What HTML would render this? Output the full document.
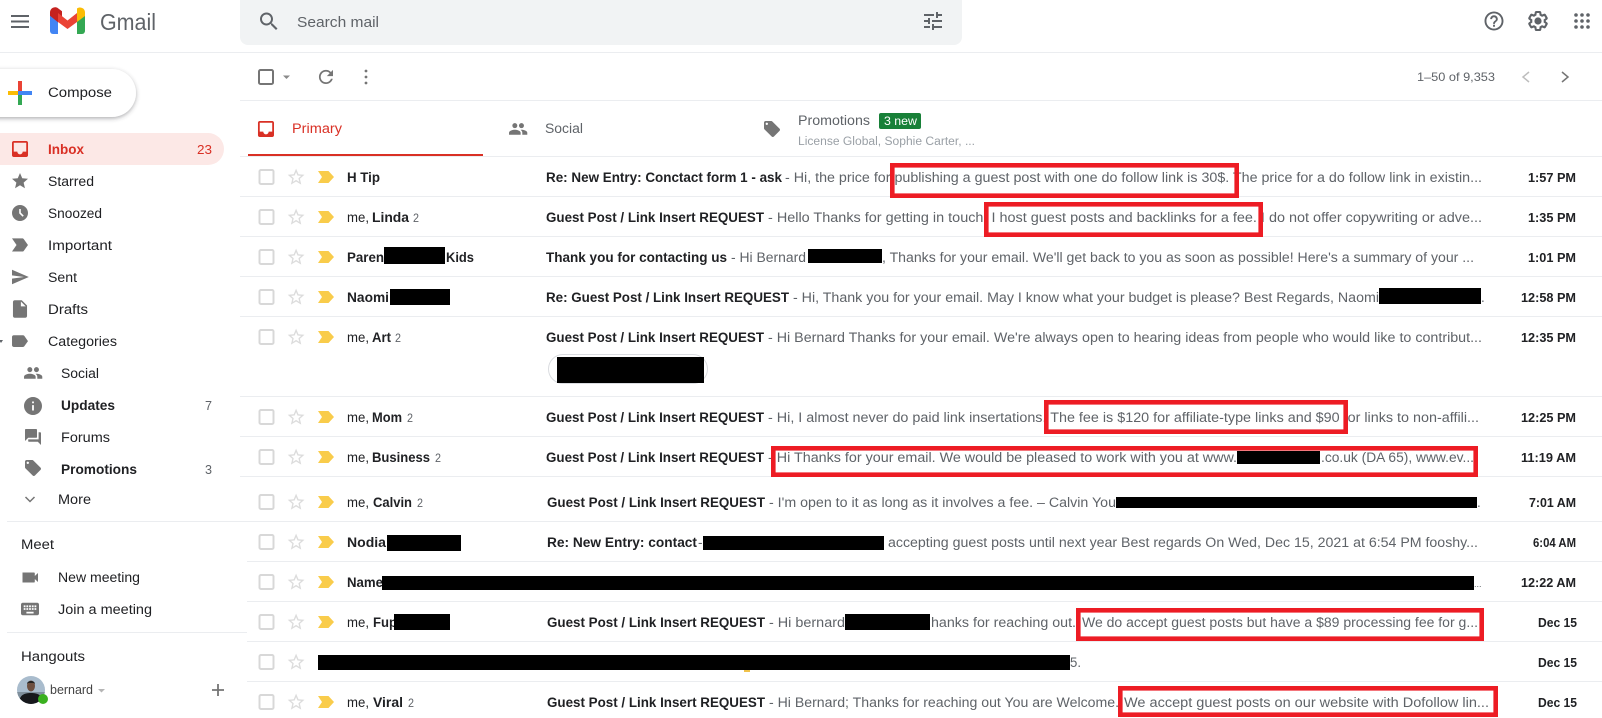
<!DOCTYPE html>
<html><head><meta charset="utf-8"><title>Gmail</title>
<style>
html,body{margin:0;padding:0;background:#fff;width:1602px;height:718px;overflow:hidden}
svg{display:block}
text{font-family:"Liberation Sans",sans-serif;font-size:13.5px;fill:#3c4043;white-space:pre}
.b{font-weight:700;fill:#202124}
.t{font-weight:700;fill:#202124;font-size:12.5px}
.s{fill:#5f6368}
.n{fill:#202124}
.i{fill:#757575}
.l{fill:#ebedf0}
.k{fill:#000}
.r{fill:none;stroke:#ed1c24;stroke-width:4.6}
</style></head><body>
<svg width="1602" height="718" viewBox="0 0 1602 718" xmlns="http://www.w3.org/2000/svg">
<defs>
<filter id="sh" x="-20%" y="-30%" width="140%" height="170%"><feDropShadow dx="0" dy="1.5" stdDeviation="2" flood-color="#3c4043" flood-opacity=".42"/></filter>
<g id="rown">
<rect x="259.5" y="-7" width="14" height="14" rx="1.5" fill="none" stroke="#d8d8d8" stroke-width="2"/>
<path transform="translate(286,-10) scale(.84)" fill="#dcdcdc" d="M22 9.24l-7.19-.62L12 2 9.19 8.63 2 9.24l5.46 4.73L5.82 21 12 17.27 18.18 21l-1.63-7.03L22 9.24zM12 15.4l-3.76 2.27 1-4.28-3.32-2.88 4.38-.38L12 6.1l1.71 4.04 4.38.38-3.32 2.88 1 4.28L12 15.4z"/>
</g>
<g id="row">
<use href="#rown"/>
<path fill="#f9cc4b" d="M318 -6h10.5l5.5 6-5.500 6H318l4-6z"/>
</g>
</defs>

<!-- Header -->
<rect x="11" y="15" width="18" height="2" fill="#5f6368"/><rect x="11" y="20.500" width="18" height="2" fill="#5f6368"/><rect x="11" y="26" width="18" height="2" fill="#5f6368"/>
<path fill="#4285f4" d="M50 15V31a3 3 0 0 0 3 3h5V20z"/>
<path fill="#34a853" d="M77 20V34h5a3 3 0 0 0 3-3V15z"/>
<path fill="#c5221f" d="M50 12.500c0-4.500 5-6.500 8-4.300l4 3v9l-4 2-8-6.500z"/>
<path fill="#fbbc04" d="M77 22V8.500c3-2.300 8-.5 8 4v3.500z"/>
<path fill="#ea4335" d="M58 13l9.500 7.500L77 13v9l-9.500 7L58 22z"/>
<text x="100" y="30" textLength="56" lengthAdjust="spacingAndGlyphs" style="font-size:23px;fill:#5f6368">Gmail</text>

<path d="M240 0H962V37a8 8 0 0 1-8 8H248a8 8 0 0 1-8-8z" fill="#f1f3f4"/>
<path transform="translate(257,9.5)" fill="#5f6368" d="M15.500 14h-.79l-.28-.27C15.410 12.590 16 11.110 16 9.500 16 5.910 13.090 3 9.500 3S3 5.910 3 9.500 5.910 16 9.500 16c1.610 0 3.090-.59 4.230-1.570l.27.28v.79l5 4.990L20.490 19l-4.990-5zm-6 0C7.010 14 5 11.990 5 9.500S7.010 5 9.500 5 14 7.010 14 9.500 11.990 14 9.500 14z"/>
<text x="297" y="27" textLength="82" lengthAdjust="spacingAndGlyphs" class="s" style="font-size:15px">Search mail</text>
<path transform="translate(921,9)" fill="#5f6368" d="M3 17v2h6v-2H3zM3 5v2h10V5H3zm10 16v-2h8v-2h-8v-2h-2v6h2zM7 9v2H3v2h4v2h2V9H7zm14 4v-2H11v2h10zm-6-4h2V7h4V5h-4V3h-2v6z"/>

<path transform="translate(1482.6,9.6) scale(.95)" fill="#5f6368" d="M11 18h2v-2h-2v2zm1-16C6.480 2 2 6.480 2 12s4.480 10 10 10 10-4.480 10-10S17.520 2 12 2zm0 18c-4.410 0-8-3.590-8-8s3.590-8 8-8 8 3.590 8 8-3.590 8-8 8zm0-14c-2.210 0-4 1.790-4 4h2c0-1.100.9-2 2-2s2 .9 2 2c0 2-3 1.750-3 5h2c0-2.250 3-2.500 3-5 0-2.210-1.790-4-4-4z"/>
<path transform="translate(1527.2,10.2) scale(.9)" fill="none" stroke="#5f6368" stroke-width="2.3" d="M19.430 12.980c.04-.32.07-.64.07-.98s-.03-.66-.07-.98l2.110-1.650c.19-.15.24-.42.12-.64l-2-3.460c-.12-.22-.39-.3-.61-.22l-2.490 1c-.52-.4-1.080-.73-1.690-.98l-.38-2.650C14.460 2.180 14.250 2 14 2h-4c-.25 0-.46.18-.49.42l-.38 2.650c-.61.25-1.170.59-1.690.98l-2.490-1c-.23-.09-.49 0-.61.22l-2 3.460c-.13.22-.07.49.12.64l2.110 1.650c-.04.32-.07.65-.07.98s.03.66.07.98l-2.110 1.650c-.19.15-.24.42-.12.64l2 3.460c.12.22.39.3.61.22l2.490-1c.52.4 1.080.73 1.690.98l.38 2.650c.03.24.24.42.49.42h4c.25 0 .46-.18.49-.42l.38-2.650c.61-.25 1.170-.59 1.690-.98l2.490 1c.23.09.49 0 .61-.22l2-3.460c.12-.22.07-.49-.12-.64l-2.110-1.650z"/>
<circle cx="1538" cy="21" r="3.600" fill="#5f6368"/>
<g fill="#5f6368"><circle cx="1576" cy="15" r="1.800"/><circle cx="1582" cy="15" r="1.800"/><circle cx="1588" cy="15" r="1.800"/><circle cx="1576" cy="21" r="1.800"/><circle cx="1582" cy="21" r="1.800"/><circle cx="1588" cy="21" r="1.800"/><circle cx="1576" cy="27" r="1.800"/><circle cx="1582" cy="27" r="1.800"/><circle cx="1588" cy="27" r="1.800"/></g>

<rect x="0" y="52" width="1602" height="1" class="l"/>

<!-- Sidebar -->
<rect x="-40" y="69" width="176" height="48" rx="24" fill="#fff" filter="url(#sh)"/>
<rect x="18" y="81" width="4" height="10" fill="#ea4335"/>
<rect x="8" y="91" width="10" height="4" fill="#fbbc04"/>
<rect x="18" y="95" width="4" height="10" fill="#34a853"/>
<rect x="18" y="91" width="14" height="4" fill="#4285f4"/>
<text x="48" y="97" textLength="64" lengthAdjust="spacingAndGlyphs" class="n">Compose</text>

<path d="M0 133H208a16 16 0 0 1 0 32H0z" fill="#fce8e6"/>
<path transform="translate(9.33,138.33) scale(.89)" fill="#d93025" d="M19 3H5c-1.100 0-2 .9-2 2v14c0 1.100.9 2 2 2h14c1.100 0 2-.9 2-2V5c0-1.100-.9-2-2-2zm0 12h-4c0 1.660-1.340 3-3 3s-3-1.340-3-3H5V5h14v10z"/>
<text x="48" y="154" textLength="36" lengthAdjust="spacingAndGlyphs" class="b" style="fill:#d93025">Inbox</text>
<text x="197" y="154" textLength="15" lengthAdjust="spacingAndGlyphs" style="fill:#d93025;font-size:12.500px">23</text>

<path transform="translate(10.4,171.4) scale(.8)" class="i" d="M12 17.270L18.180 21l-1.640-7.030L22 9.240l-7.190-.61L12 2 9.190 8.630 2 9.240l5.460 4.730L5.820 21z"/>
<text x="48" y="186" textLength="46" lengthAdjust="spacingAndGlyphs" class="n">Starred</text>
<path transform="translate(10.4,203.4) scale(.8)" class="i" d="M11.990 2C6.470 2 2 6.480 2 12s4.470 10 9.990 10C17.520 22 22 17.520 22 12S17.520 2 11.990 2zm3.300 14.710L11 12.410V7h2v4.590l3.710 3.710-1.420 1.410z"/>
<text x="48" y="218" textLength="54" lengthAdjust="spacingAndGlyphs" class="n">Snoozed</text>
<path transform="translate(8.7,233.7) scale(.94)" class="i" d="M3.500 18.990l11 .01c.67 0 1.270-.33 1.630-.84L20.500 12l-4.370-6.160c-.36-.51-.96-.84-1.630-.84l-11 .01L8.340 12 3.500 18.990z"/>
<text x="48" y="250" textLength="64" lengthAdjust="spacingAndGlyphs" class="n">Important</text>
<path transform="translate(10.4,267.4) scale(.8)" class="i" d="M2.010 21L23 12 2.010 3 2 10l15 2-15 2z"/>
<text x="48" y="282" textLength="29" lengthAdjust="spacingAndGlyphs" class="n">Sent</text>
<path transform="translate(9.44,298.44) scale(.88)" class="i" d="M6 2c-1.100 0-1.990.9-1.990 2L4 20c0 1.100.89 2 1.990 2H18c1.100 0 2-.9 2-2V8l-6-6H6zm7 7V3.500L18.500 9H13z"/>
<text x="48" y="314" textLength="40" lengthAdjust="spacingAndGlyphs" class="n">Drafts</text>
<path d="M0 340h4l-2 3z" transform="translate(-1,0)" fill="#5f6368"/>
<path transform="translate(9.5,331) scale(.84)" class="i" d="M17.630 5.840C17.270 5.330 16.670 5 16 5L5 5.010C3.900 5.010 3 5.900 3 7v10c0 1.100.9 1.990 2 1.990L16 19c.67 0 1.270-.33 1.630-.84L22 12l-4.370-6.160z"/>
<text x="48" y="346" textLength="69" lengthAdjust="spacingAndGlyphs" class="n">Categories</text>
<path transform="translate(23.2,363) scale(.83)" class="i" d="M16 11c1.660 0 2.990-1.340 2.990-3S17.660 5 16 5c-1.660 0-3 1.340-3 3s1.340 3 3 3zm-8 0c1.660 0 2.990-1.340 2.990-3S9.660 5 8 5C6.340 5 5 6.340 5 8s1.340 3 3 3zm0 2c-2.330 0-7 1.170-7 3.500V19h14v-2.500c0-2.330-4.670-3.500-7-3.500zm8 0c-.29 0-.62.02-.97.05 1.160.84 1.970 1.970 1.970 3.450V19h6v-2.500c0-2.330-4.670-3.500-7-3.500z"/>
<text x="61" y="378" textLength="38" lengthAdjust="spacingAndGlyphs" class="n">Social</text>
<path transform="translate(22.2,395.200) scale(.9)" class="i" d="M12 2C6.480 2 2 6.480 2 12s4.480 10 10 10 10-4.480 10-10S17.520 2 12 2zm1 15h-2v-6h2v6zm0-8h-2V7h2v2z"/>
<text x="61" y="410" textLength="54" lengthAdjust="spacingAndGlyphs" class="b">Updates</text>
<text x="205" y="410" textLength="7" lengthAdjust="spacingAndGlyphs" class="s" style="font-size:12.500px">7</text>
<path transform="translate(23.4,427.400) scale(.8)" class="i" d="M21 6h-2v9H6v2c0 .55.45 1 1 1h11l4 4V7c0-.55-.45-1-1-1zm-4 6V3c0-.55-.45-1-1-1H3c-.55 0-1 .45-1 1v14l4-4h10c.55 0 1-.45 1-1z"/>
<text x="61" y="442" textLength="49" lengthAdjust="spacingAndGlyphs" class="n">Forums</text>
<path transform="translate(23.4,458.400) scale(.8)" class="i" d="M21.410 11.580l-9-9C12.050 2.220 11.550 2 11 2H4c-1.100 0-2 .9-2 2v7c0 .55.22 1.050.59 1.420l9 9c.36.36.86.58 1.410.58.55 0 1.050-.22 1.410-.59l7-7c.37-.36.59-.86.59-1.410 0-.55-.23-1.060-.59-1.420zM5.500 7C4.670 7 4 6.330 4 5.500S4.670 4 5.500 4 7 4.670 7 5.500 6.330 7 5.500 7z"/>
<text x="61" y="474" textLength="76" lengthAdjust="spacingAndGlyphs" class="b">Promotions</text>
<text x="205" y="474" textLength="7" lengthAdjust="spacingAndGlyphs" class="s" style="font-size:12.500px">3</text>
<path d="M25.500 497l4.500 4.500 4.500-4.500" fill="none" stroke="#757575" stroke-width="1.500"/>
<text x="58" y="504" textLength="33" lengthAdjust="spacingAndGlyphs" class="n">More</text>

<rect x="7" y="521" width="240" height="1" class="l"/>
<text x="21" y="549" textLength="33" lengthAdjust="spacingAndGlyphs" class="n">Meet</text>
<path class="i" d="M22.500 572.500h11.500a.8.8 0 0 1 .8.8v2.700l3.200-3v9l-3.200-3v2.700a.8.8 0 0 1-.8.8H22.500z"/>
<text x="58" y="582" textLength="82" lengthAdjust="spacingAndGlyphs" class="n">New meeting</text>
<path transform="translate(19.2,598.200) scale(.9)" class="i" d="M20 5H4c-1.100 0-1.990.9-1.990 2L2 17c0 1.100.9 2 2 2h16c1.100 0 2-.9 2-2V7c0-1.100-.9-2-2-2zm-9 3h2v2h-2V8zm0 3h2v2h-2v-2zM8 8h2v2H8V8zm0 3h2v2H8v-2zm-1 2H5v-2h2v2zm0-3H5V8h2v2zm9 7H8v-2h8v2zm0-4h-2v-2h2v2zm0-3h-2V8h2v2zm3 3h-2v-2h2v2zm0-3h-2V8h2v2z"/>
<text x="58" y="614" textLength="94" lengthAdjust="spacingAndGlyphs" class="n">Join a meeting</text>
<rect x="7" y="632" width="240" height="1" class="l"/>
<text x="21" y="661" textLength="64" lengthAdjust="spacingAndGlyphs" class="n">Hangouts</text>
<clipPath id="av"><circle cx="31" cy="690" r="14"/></clipPath>
<g clip-path="url(#av)">
<rect x="17" y="676" width="28" height="28" fill="#a9bccd"/>
<rect x="17" y="692" width="28" height="12" fill="#7f8f9c"/>
<path d="M19 704c0-9 5-11 12-11s12 2 12 11z" fill="#17181c"/>
<ellipse cx="31" cy="686" rx="4" ry="5.500" fill="#6d4f40"/>
<path d="M27 684c0-4 8-4 8 0l-1-1h-6z" fill="#222"/>
</g>
<circle cx="43" cy="699" r="5" fill="#3ab01f"/>
<text x="50" y="694" textLength="43" lengthAdjust="spacingAndGlyphs" style="font-size:13px;fill:#444">bernard</text>
<path d="M98 689h7l-3.500 3.500z" fill="#b5b5b5"/>
<path d="M218 684v12M212 690h12" stroke="#757575" stroke-width="1.800" fill="none"/>

<!-- Toolbar -->
<rect x="259" y="70" width="14" height="14" rx="1.500" fill="none" stroke="#757575" stroke-width="2"/>
<path d="M283 75.500h7l-3.500 3.500z" fill="#8a8a8a"/>
<path transform="translate(315.4,66.400) scale(.88)" fill="#757575" d="M17.650 6.350C16.200 4.900 14.210 4 12 4c-4.420 0-7.990 3.580-7.990 8s3.570 8 7.990 8c3.730 0 6.840-2.550 7.730-6h-2.080c-.82 2.330-3.040 4-5.650 4-3.310 0-6-2.690-6-6s2.690-6 6-6c1.660 0 3.140.69 4.220 1.780L13 11h7V4l-2.350 2.350z"/>
<g fill="#757575"><circle cx="366" cy="71" r="1.400"/><circle cx="366" cy="77" r="1.400"/><circle cx="366" cy="83" r="1.400"/></g>
<text x="1417" y="81" textLength="78" lengthAdjust="spacingAndGlyphs" class="s" style="font-size:12px">1–50 of 9,353</text>
<path d="M1529 72l-6 5 6 5" fill="none" stroke="#bdbdbd" stroke-width="1.500"/>
<path d="M1562 72l6 5-6 5" fill="none" stroke="#757575" stroke-width="1.500"/>
<rect x="240" y="100" width="1362" height="1" class="l"/>

<!-- Tabs -->
<path transform="translate(255.3,118.300) scale(.89)" fill="#d93025" d="M19 3H5c-1.100 0-2 .9-2 2v14c0 1.100.9 2 2 2h14c1.100 0 2-.9 2-2V5c0-1.100-.9-2-2-2zm0 12h-4c0 1.660-1.340 3-3 3s-3-1.340-3-3H5V5h14v10z"/>
<text x="292" y="133" textLength="50" lengthAdjust="spacingAndGlyphs" style="fill:#d93025">Primary</text>
<rect x="248" y="154" width="235" height="3" fill="#d93025"/>
<path transform="translate(508.2,119) scale(.83)" class="i" d="M16 11c1.660 0 2.990-1.340 2.990-3S17.660 5 16 5c-1.660 0-3 1.340-3 3s1.340 3 3 3zm-8 0c1.660 0 2.990-1.340 2.990-3S9.660 5 8 5C6.340 5 5 6.340 5 8s1.340 3 3 3zm0 2c-2.330 0-7 1.170-7 3.500V19h14v-2.500c0-2.330-4.670-3.500-7-3.500zm8 0c-.29 0-.62.02-.97.05 1.160.84 1.970 1.970 1.970 3.450V19h6v-2.500c0-2.330-4.670-3.500-7-3.500z"/>
<text x="545" y="133" textLength="38" lengthAdjust="spacingAndGlyphs" class="s">Social</text>
<path transform="translate(762.4,119.400) scale(.8)" class="i" d="M21.410 11.580l-9-9C12.050 2.220 11.550 2 11 2H4c-1.100 0-2 .9-2 2v7c0 .55.22 1.050.59 1.420l9 9c.36.36.86.58 1.410.58.55 0 1.050-.22 1.410-.59l7-7c.37-.36.59-.86.59-1.410 0-.55-.23-1.060-.59-1.420zM5.500 7C4.670 7 4 6.330 4 5.500S4.670 4 5.500 4 7 4.670 7 5.500 6.330 7 5.500 7z"/>
<text x="798" y="125" textLength="72" lengthAdjust="spacingAndGlyphs" class="s">Promotions</text>
<rect x="879" y="113" width="42" height="16" rx="2" fill="#188038"/>
<text x="884" y="125" textLength="33" lengthAdjust="spacingAndGlyphs" style="fill:#fff;font-size:12px">3 new</text>
<text x="798" y="145" textLength="177" lengthAdjust="spacingAndGlyphs" style="fill:#9aa0a6;font-size:11.500px">License Global, Sophie Carter, ...</text>
<rect x="240" y="156" width="1362" height="1" class="l"/>

<!-- Row separators -->
<rect x="240" y="196" width="1362" height="1" class="l"/>
<rect x="240" y="236" width="1362" height="1" class="l"/>
<rect x="240" y="276" width="1362" height="1" class="l"/>
<rect x="240" y="316" width="1362" height="1" class="l"/>
<rect x="240" y="396" width="1362" height="1" class="l"/>
<rect x="240" y="436" width="1362" height="1" class="l"/>
<rect x="240" y="476" width="1362" height="1" class="l"/>
<rect x="247" y="521" width="1355" height="1" class="l"/>
<rect x="247" y="561" width="1355" height="1" class="l"/>
<rect x="247" y="601" width="1355" height="1" class="l"/>
<rect x="247" y="641" width="1355" height="1" class="l"/>
<rect x="247" y="681" width="1355" height="1" class="l"/>

<!-- Row 1 -->
<use href="#row" y="177"/>
<text x="347" y="182" textLength="33" lengthAdjust="spacingAndGlyphs" class="b">H Tip</text>
<text x="546" y="182" textLength="236" lengthAdjust="spacingAndGlyphs" class="b">Re: New Entry: Conctact form 1 - ask</text>
<text x="785" y="182" textLength="697" lengthAdjust="spacingAndGlyphs" class="s">- Hi, the price for publishing a guest post with one do follow link is 30$. The price for a do follow link in existin...</text>
<text x="1528" y="182" textLength="48" lengthAdjust="spacingAndGlyphs" class="t">1:57 PM</text>

<!-- Row 2 -->
<use href="#row" y="217"/>
<text x="347" y="222" textLength="22" lengthAdjust="spacingAndGlyphs" class="n">me,</text>
<text x="372" y="222" textLength="37" lengthAdjust="spacingAndGlyphs" class="b">Linda</text>
<text x="413" y="222" textLength="6" lengthAdjust="spacingAndGlyphs" class="s" style="font-size:12px">2</text>
<text x="546" y="222" textLength="218" lengthAdjust="spacingAndGlyphs" class="b">Guest Post / Link Insert REQUEST</text>
<text x="768" y="222" textLength="714" lengthAdjust="spacingAndGlyphs" class="s">- Hello Thanks for getting in touch. I host guest posts and backlinks for a fee. I do not offer copywriting or adve...</text>
<text x="1528" y="222" textLength="48" lengthAdjust="spacingAndGlyphs" class="t">1:35 PM</text>

<!-- Row 3 -->
<use href="#row" y="257"/>
<text x="347" y="262" textLength="37" lengthAdjust="spacingAndGlyphs" class="b">Paren</text>
<rect x="384" y="247" width="61" height="17" class="k"/>
<text x="446" y="262" textLength="28" lengthAdjust="spacingAndGlyphs" class="b">Kids</text>
<text x="546" y="262" textLength="181" lengthAdjust="spacingAndGlyphs" class="b">Thank you for contacting us</text>
<text x="731" y="262" textLength="75" lengthAdjust="spacingAndGlyphs" class="s">- Hi Bernard</text>
<rect x="808" y="249" width="74" height="14" class="k"/>
<text x="882" y="262" textLength="592" lengthAdjust="spacingAndGlyphs" class="s">, Thanks for your email. We'll get back to you as soon as possible! Here's a summary of your ...</text>
<text x="1528" y="262" textLength="48" lengthAdjust="spacingAndGlyphs" class="t">1:01 PM</text>

<!-- Row 4 -->
<use href="#row" y="297"/>
<text x="347" y="302" textLength="42" lengthAdjust="spacingAndGlyphs" class="b">Naomi</text>
<rect x="390" y="289" width="60" height="16" class="k"/>
<text x="546" y="302" textLength="243" lengthAdjust="spacingAndGlyphs" class="b">Re: Guest Post / Link Insert REQUEST</text>
<text x="793" y="302" textLength="586" lengthAdjust="spacingAndGlyphs" class="s">- Hi, Thank you for your email. May I know what your budget is please? Best Regards, Naomi</text>
<rect x="1379" y="288" width="102" height="16" class="k"/>
<text x="1481" y="302" class="s">.</text>
<text x="1521" y="302" textLength="55" lengthAdjust="spacingAndGlyphs" class="t">12:58 PM</text>

<!-- Row 5 -->
<use href="#row" y="337"/>
<text x="347" y="342" textLength="22" lengthAdjust="spacingAndGlyphs" class="n">me,</text>
<text x="372" y="342" textLength="19" lengthAdjust="spacingAndGlyphs" class="b">Art</text>
<text x="395" y="342" textLength="6" lengthAdjust="spacingAndGlyphs" class="s" style="font-size:12px">2</text>
<text x="546" y="342" textLength="218" lengthAdjust="spacingAndGlyphs" class="b">Guest Post / Link Insert REQUEST</text>
<text x="768" y="342" textLength="714" lengthAdjust="spacingAndGlyphs" class="s">- Hi Bernard Thanks for your email. We're always open to hearing ideas from people who would like to contribut...</text>
<text x="1521" y="342" textLength="55" lengthAdjust="spacingAndGlyphs" class="t">12:35 PM</text>
<rect x="548.500" y="354.500" width="159" height="29" rx="14.500" fill="#fff" stroke="#dadce0"/>
<rect x="557" y="357" width="147" height="26" class="k"/>

<!-- Row 6 -->
<use href="#row" y="417"/>
<text x="347" y="422" textLength="22" lengthAdjust="spacingAndGlyphs" class="n">me,</text>
<text x="372" y="422" textLength="30" lengthAdjust="spacingAndGlyphs" class="b">Mom</text>
<text x="407" y="422" textLength="6" lengthAdjust="spacingAndGlyphs" class="s" style="font-size:12px">2</text>
<text x="546" y="422" textLength="218" lengthAdjust="spacingAndGlyphs" class="b">Guest Post / Link Insert REQUEST</text>
<text x="768" y="422" textLength="711" lengthAdjust="spacingAndGlyphs" class="s">- Hi, I almost never do paid link insertations. The fee is $120 for affiliate-type links and $90 for links to non-affili...</text>
<text x="1521" y="422" textLength="55" lengthAdjust="spacingAndGlyphs" class="t">12:25 PM</text>

<!-- Row 7 -->
<use href="#row" y="457"/>
<text x="347" y="462" textLength="22" lengthAdjust="spacingAndGlyphs" class="n">me,</text>
<text x="372" y="462" textLength="58" lengthAdjust="spacingAndGlyphs" class="b">Business</text>
<text x="435" y="462" textLength="6" lengthAdjust="spacingAndGlyphs" class="s" style="font-size:12px">2</text>
<text x="546" y="462" textLength="218" lengthAdjust="spacingAndGlyphs" class="b">Guest Post / Link Insert REQUEST</text>
<text x="768" y="462" textLength="469" lengthAdjust="spacingAndGlyphs" class="s">- Hi Thanks for your email. We would be pleased to work with you at www.</text>
<rect x="1237" y="451" width="83" height="13" class="k"/>
<text x="1321" y="462" textLength="153" lengthAdjust="spacingAndGlyphs" class="s">.co.uk (DA 65), www.ev...</text>
<text x="1521" y="462" textLength="55" lengthAdjust="spacingAndGlyphs" class="t">11:19 AM</text>

<!-- Row 8 -->
<use href="#row" y="502"/>
<text x="347" y="507" textLength="22" lengthAdjust="spacingAndGlyphs" class="n">me,</text>
<text x="373" y="507" textLength="39" lengthAdjust="spacingAndGlyphs" class="b">Calvin</text>
<text x="417" y="507" textLength="6" lengthAdjust="spacingAndGlyphs" class="s" style="font-size:12px">2</text>
<text x="547" y="507" textLength="218" lengthAdjust="spacingAndGlyphs" class="b">Guest Post / Link Insert REQUEST</text>
<text x="769" y="507" textLength="347" lengthAdjust="spacingAndGlyphs" class="s">- I'm open to it as long as it involves a fee. – Calvin You</text>
<rect x="1116" y="497" width="361" height="11" class="k"/>
<text x="1477" y="507" class="s">.</text>
<text x="1529" y="507" textLength="47" lengthAdjust="spacingAndGlyphs" class="t">7:01 AM</text>

<!-- Row 9 -->
<use href="#row" y="542"/>
<text x="347" y="547" textLength="39" lengthAdjust="spacingAndGlyphs" class="b">Nodia</text>
<rect x="387" y="535" width="74" height="16" class="k"/>
<text x="547" y="547" textLength="150" lengthAdjust="spacingAndGlyphs" class="b">Re: New Entry: contact</text>
<text x="698" y="547" class="s">-</text>
<rect x="703" y="536" width="181" height="14" class="k"/>
<text x="888" y="547" textLength="590" lengthAdjust="spacingAndGlyphs" class="s">accepting guest posts until next year Best regards On Wed, Dec 15, 2021 at 6:54 PM fooshy...</text>
<text x="1533" y="547" textLength="43" lengthAdjust="spacingAndGlyphs" class="t">6:04 AM</text>

<!-- Row 10 -->
<use href="#row" y="582"/>
<text x="347" y="587" textLength="36" lengthAdjust="spacingAndGlyphs" class="b">Name</text>
<rect x="382" y="576" width="1092" height="14" class="k"/>
<text x="1474" y="587" class="s" style="font-size:9px">...</text>
<text x="1521" y="587" textLength="55" lengthAdjust="spacingAndGlyphs" class="t">12:22 AM</text>

<!-- Row 11 -->
<use href="#row" y="622"/>
<text x="347" y="627" textLength="22" lengthAdjust="spacingAndGlyphs" class="n">me,</text>
<text x="373" y="627" textLength="24" lengthAdjust="spacingAndGlyphs" class="b">Fup</text>
<rect x="394" y="614" width="56" height="16" class="k"/>
<text x="547" y="627" textLength="218" lengthAdjust="spacingAndGlyphs" class="b">Guest Post / Link Insert REQUEST</text>
<text x="769" y="627" textLength="76" lengthAdjust="spacingAndGlyphs" class="s">- Hi bernard</text>
<rect x="845" y="614" width="85" height="16" class="k"/>
<text x="931" y="627" textLength="145" lengthAdjust="spacingAndGlyphs" class="s">hanks for reaching out.</text>
<text x="1082" y="627" textLength="396" lengthAdjust="spacingAndGlyphs" class="s">We do accept guest posts but have a $89 processing fee for g...</text>
<text x="1538" y="627" textLength="39" lengthAdjust="spacingAndGlyphs" class="t">Dec 15</text>

<!-- Row 12 -->
<use href="#rown" y="662"/>
<rect x="318" y="655" width="752" height="15" class="k"/>
<text x="1070" y="667" textLength="11" lengthAdjust="spacingAndGlyphs" class="s">5.</text>
<rect x="744" y="670" width="6" height="2" fill="#f0c24a"/>
<text x="1538" y="667" textLength="39" lengthAdjust="spacingAndGlyphs" class="t">Dec 15</text>

<!-- Row 13 -->
<use href="#row" y="702"/>
<text x="347" y="707" textLength="22" lengthAdjust="spacingAndGlyphs" class="n">me,</text>
<text x="373" y="707" textLength="30" lengthAdjust="spacingAndGlyphs" class="b">Viral</text>
<text x="408" y="707" textLength="6" lengthAdjust="spacingAndGlyphs" class="s" style="font-size:12px">2</text>
<text x="547" y="707" textLength="218" lengthAdjust="spacingAndGlyphs" class="b">Guest Post / Link Insert REQUEST</text>
<text x="769" y="707" textLength="350" lengthAdjust="spacingAndGlyphs" class="s">- Hi Bernard; Thanks for reaching out You are Welcome.</text>
<text x="1124" y="707" textLength="365" lengthAdjust="spacingAndGlyphs" class="s">We accept guest posts on our website with Dofollow lin...</text>
<text x="1538" y="707" textLength="39" lengthAdjust="spacingAndGlyphs" class="t">Dec 15</text>

<!-- Red annotation boxes -->
<rect x="892.300" y="165.300" width="344.400" height="30.400" class="r"/>
<rect x="986.300" y="204.300" width="274.400" height="30.400" class="r"/>
<rect x="1046.300" y="402.300" width="299.400" height="29.400" class="r"/>
<rect x="773.300" y="448.300" width="702.400" height="26.400" class="r"/>
<rect x="1078.300" y="610.300" width="403.400" height="28.400" class="r"/>
<rect x="1120.300" y="688.300" width="375.400" height="26.400" class="r"/>
</svg>
</body></html>
